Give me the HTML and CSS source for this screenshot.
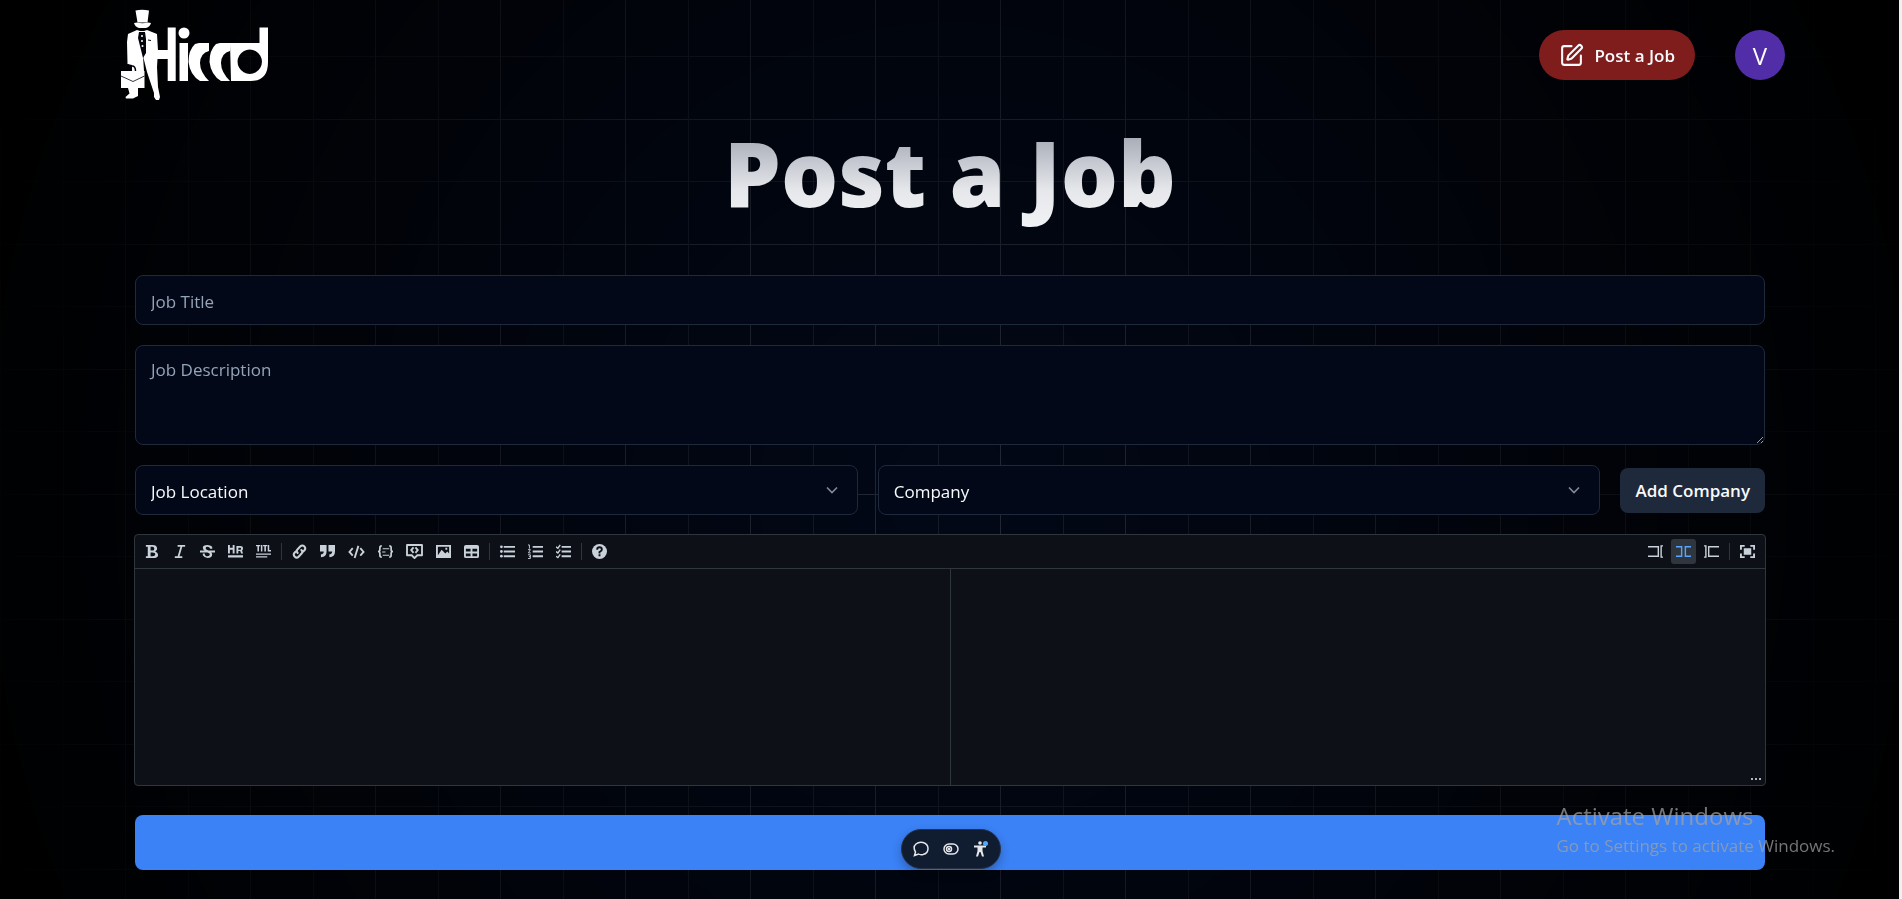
FILE: index.html
```html
<!DOCTYPE html>
<html lang="en">
<head>
<meta charset="utf-8">
<title>Post a Job</title>
<link rel="stylesheet" href="styles.css">
</head>
<body>
<div class="grid-background" aria-hidden="true"></div>
<div class="scroll-track" aria-hidden="true"></div>

<header class="site-header">
  <a class="logo" href="#" aria-label="Hirrd">
    <svg width="150" height="94" viewBox="0 0 150 94" fill="#fff" aria-hidden="true">
      <path d="M15.500 2.500q6.500-1.500 13.500 0l-1.500 12H17.500z"/>
      <path d="M14 15l3-.5q5.500 1.500 11 0l3 .5q-1 4-5 5h-7q-4-1-5-5z"/>
      <path d="M17 22l-9 4-1 8 .5 22 4.500 1v6h12l-1-15 4 16 7 21v4l2 3h3l1-3-2-10-1-20 1-16-1-17-10-4-3 1h-4z"/>
      <path d="M19 24l6 0 1 7 0 14-3 5-3-12-2-8z" fill="#02040b"/>
      <circle cx="22" cy="28" r="1"/><circle cx="22" cy="33" r="1"/><circle cx="22.500" cy="38" r="1"/>
      <path d="M28 32l3 .5M8 56.500l4 2.500" fill="none" stroke="#02040b"/>
      <path d="M8.500 63q0-5 3.500-5t3.500 5" fill="none" stroke="#02040b" stroke-width="1.500"/>
      <path d="M1 63h23.500v17H18v8l-5 2.500H6l-.5-1.500 4-3.500L8 80H1z"/>
      <path d="M1 68l12 5.500 11.500-5.500" fill="none" stroke="#02040b" stroke-width=".8"/>
      <path d="M35 42h12.700V19.500h8V73h-8V51H35z"/>
      <circle cx="64" cy="25" r="5.500"/>
      <path d="M59.500 35H68v38h-8.500z"/>
      <path d="M89 35H79l-4 1q-6.500 6-6.500 18Q70 67 80 73h9q-9-9-9-18Q80.500 45 89 43z"/>
      <path d="M111 35h-11l-4 1q-6.500 6-6.500 18Q91 67 101 73h9q-9-9-9-18Q101.500 45 110 43z"/>
      <path fill-rule="evenodd" d="M110 35h29.500V19.500h8.500V54q0 19-17 19h-20zM129.700 41.500a12.200 12.200 0 1 0 .1 0z"/>
    </svg>
  </a>
  <nav class="header-actions">
    <button class="post-button" type="button">
      <svg width="25" height="25" viewBox="0 0 24 24" fill="none" stroke="currentColor" stroke-width="2" stroke-linecap="round" stroke-linejoin="round" aria-hidden="true"><path d="M12 3H5a2 2 0 0 0-2 2v14a2 2 0 0 0 2 2h14a2 2 0 0 0 2-2v-7"/><path d="M18.375 2.625a1 1 0 0 1 3 3l-9.013 9.014a2 2 0 0 1-.853.505l-2.873.84a.5.5 0 0 1-.62-.62l.84-2.873a2 2 0 0 1 .506-.852z"/></svg>
      Post a Job
    </button>
    <button class="avatar" type="button" aria-label="Account">V</button>
  </nav>
</header>

<main class="page">
  <h1 class="page-title">Post a Job</h1>
  <form class="job-form">
    <input class="field title-field" type="text" placeholder="Job Title" aria-label="Job Title">
    <textarea class="field description-field" placeholder="Job Description" aria-label="Job Description"></textarea>
    <div class="select-row">
      <div class="select-wrap">
        <select class="field" aria-label="Job Location"><option>Job Location</option></select>
        <svg class="chevron" width="20" height="20" viewBox="0 0 24 24" aria-hidden="true"><path d="m6 9 6 6 6-6"/></svg>
      </div>
      <div class="select-wrap">
        <select class="field" aria-label="Company"><option>Company</option></select>
        <svg class="chevron" width="20" height="20" viewBox="0 0 24 24" aria-hidden="true"><path d="m6 9 6 6 6-6"/></svg>
      </div>
      <button class="add-button" type="button">Add Company</button>
    </div>

    <section class="editor" aria-label="Requirements">
      <div class="toolbar">
        <div class="tools">
          <button class="tool" type="button" aria-label="Bold"><svg viewBox="0 0 16 16"><path fill-rule="evenodd" d="M2 1h7c3 0 5 1 5 4 0 1-1 2-2 3 2 1 3 2 3 4 0 2-2 3-5 3H2v-2h2V3H2zm5 2v4h2q2 0 2-2t-2-2zm0 6v4h2q3 0 3-2t-3-2z"/></svg></button>
          <button class="tool" type="button" aria-label="Italic"><svg viewBox="0 0 16 16"><path d="M6 1h8v2h-3L8 13h3v2H3v-2h3L9 3H6z"/></svg></button>
          <button class="tool" type="button" aria-label="Strikethrough"><svg viewBox="0 0 16 16"><path d="M0 7h16v2H0zM13 5V3Q11 1 8 1 3 1 3 4q0 2 2 3h4Q6 6 6 4.500 6 3 8 3q2 0 3 2zM3 10v2q2 3 5 3 5 0 5-4 0-1-1-2H8q3 1 2.500 2.500Q10 13 8 13q-3 0-3-3z"/></svg></button>
          <button class="tool" type="button" aria-label="Horizontal rule"><svg viewBox="0 0 16 16"><path fill-rule="evenodd" d="M0 12h16v2.500H0zM0 1h2v3h3V1h2v9H5V6H2v4H0zm9 1h4q3 0 3 2.500 0 2-1 2.500l1 3h-2l-1-2.500h-2V10H9zm2 2v2h2q1 0 1-1t-1-1z"/></svg></button>
          <button class="tool" type="button" aria-label="Title"><svg viewBox="0 0 16 16"><path d="M0 10h16v1.500H0zm0 3h12v1.500H0zM0 1h4.500v1.500h-1.300V8H1.500V2.500H0zm5.200 0h1.600v7H5.200zm2.300 0H12v1.500h-1.400V8H8.900V2.500H7.500zm5 0h1.600v5.500H16V8h-3.500z"/></svg></button>
          <span class="divider"></span>
          <button class="tool" type="button" aria-label="Link"><svg viewBox="0 0 16 16"><g fill="none" stroke="currentColor" stroke-width="2.200" stroke-linecap="round"><path d="M6 9.500q-2-2 0-4L9 2.500q2-2 4 0t.5 4L12 8"/><path d="M10 6.500q2 2 0 4L7 13.500q-2 2-4 0t-.5-4L4 8"/></g></svg></button>
          <button class="tool" type="button" aria-label="Quote"><svg viewBox="0 0 16 16"><path d="M0 1h7v7q0 6-6 6v-3q3 0 3-3H0zm9 0h7v7q0 6-6 6v-3q3 0 3-3H9z"/></svg></button>
          <button class="tool wide" type="button" aria-label="Code"><svg viewBox="0 0 18 16"><path fill="none" stroke="currentColor" stroke-width="2" d="M5 4.500 1.500 8.500 5 12.500m8-8 3.500 4-3.500 4M11 2 7 15"/></svg></button>
          <button class="tool wide" type="button" aria-label="Code block"><svg viewBox="0 0 18 16"><path fill="none" stroke="currentColor" stroke-width="1.800" d="M5 2Q3 2 3 4v2q0 2-2 2 2 0 2 2v2q0 2 2 2m8-12q2 0 2 2v2q0 2 2 2-2 0-2 2v2q0 2-2 2"/><path fill="none" stroke="currentColor" stroke-width="1.200" d="M6 5h7M5.500 8.500H9M6 12h7"/></svg></button>
          <button class="tool wide" type="button" aria-label="Comment"><svg viewBox="0 0 18 16"><path fill="none" stroke="currentColor" stroke-width="2" stroke-linejoin="round" d="M1 1h16v11h-5l-3 3-3-3H1z"/><path fill="none" stroke="currentColor" stroke-width="2" d="M8 3.500 5.500 6.500 8 9.500m2-6 2.500 3-2.500 3"/></svg></button>
          <button class="tool wide" type="button" aria-label="Image"><svg viewBox="0 0 18 16"><path fill-rule="evenodd" d="M1 1h16v14H1zm2 2v9l4-6 4 4 2-2 2 2V3zm8 1h2v2h-2z"/></svg></button>
          <button class="tool" type="button" aria-label="Table"><svg viewBox="0 0 16 16"><path fill-rule="evenodd" d="M2 1h12q2 0 2 2v10q0 2-2 2H2q-2 0-2-2V3q0-2 2-2zm0 4v3h5V5zm7 0v3h5V5zm-7 5v3h5v-3zm7 0v3h5v-3z"/></svg></button>
          <span class="divider"></span>
          <button class="tool" type="button" aria-label="Bulleted list"><svg viewBox="0 0 16 16"><path d="M4 2h12v2H4zm0 5h12v2H4zm0 5h12v2H4z"/><circle cx="1.500" cy="3" r="1.500"/><circle cx="1.500" cy="8" r="1.500"/><circle cx="1.500" cy="13" r="1.500"/></svg></button>
          <button class="tool" type="button" aria-label="Numbered list"><svg viewBox="0 0 16 16"><path d="M5 2h11v2H5zm0 5h11v2H5zm0 5h11v2H5z"/><path fill="none" stroke="currentColor" d="M0 1h1.500v4M0 6h2.500L.5 9.500H3M0 11.500h2.500v4H0m1-2h1.500"/></svg></button>
          <button class="tool" type="button" aria-label="Task list"><svg viewBox="0 0 16 16"><path d="M6 2h10v2H6zm0 5h10v2H6zm0 5h10v2H6z"/><path fill="none" stroke="currentColor" stroke-width="1.500" d="m0 3 2 1.500L4.500 1M0 8l2 1.500L4.500 6M0 13l2 1.500L4.500 11"/></svg></button>
          <span class="divider"></span>
          <button class="tool" type="button" aria-label="Help"><svg viewBox="0 0 16 16"><circle cx="8" cy="8" r="8"/><path fill="none" stroke="#0d1117" stroke-width="2" d="M5.500 6q0-2.500 2.500-2.500T10.500 6Q10.500 7 8 8.500V10m0 1v2"/></svg></button>
        </div>
        <div class="tools">
          <button class="tool" type="button" aria-label="Edit"><svg viewBox="0 0 16 16"><path fill="none" stroke="currentColor" stroke-width="1.500" d="M0 3h11v10H0M16 2h-2v12h2"/></svg></button>
          <button class="tool active" type="button" aria-label="Live"><svg viewBox="0 0 16 16"><path fill="none" stroke="currentColor" stroke-width="1.500" d="M0 3h6v10H0M16 3h-6v10h6"/></svg></button>
          <button class="tool" type="button" aria-label="Preview"><svg viewBox="0 0 16 16"><path fill="none" stroke="currentColor" stroke-width="1.500" d="M16 3H5v10h11M0 2h2v12H0"/></svg></button>
          <span class="divider"></span>
          <button class="tool" type="button" aria-label="Fullscreen"><svg viewBox="0 0 16 16"><path d="M4 4.500h8v7H4z"/><path fill="none" stroke="currentColor" stroke-width="2" d="M1 6V2h4m6 0h4v4M1 10v4h4m6 0h4v-4"/></svg></button>
        </div>
      </div>
      <div class="editor-panes">
        <textarea class="editor-input" aria-label="Markdown"></textarea>
        <div class="preview"><svg width="12" height="4" viewBox="0 0 12 4" fill="#e6edf3" aria-hidden="true"><circle cx="2" cy="2" r="1"/><circle cx="6" cy="2" r="1"/><circle cx="10" cy="2" r="1"/></svg></div>
      </div>
    </section>
    <button class="submit-button" type="submit" aria-label="Submit"></button>
  </form>
</main>

<aside class="dev-toolbar" aria-label="Page tools">
  <button type="button" aria-label="Comment"><svg width="16" height="16" viewBox="0 0 16 16" fill="none" stroke="currentColor" stroke-width="1.500"><path d="M1.500 14.500 2.500 11Q-.5 6 3 3q3-2.500 7-1.500 5 1.500 5 6 0 5-5 6-3 .5-4.500-.5z"/></svg></button>
  <button type="button" aria-label="Draft mode"><svg width="16" height="16" viewBox="0 0 16 16" fill="none" stroke="currentColor" stroke-width="1.500"><rect x="1" y="3" width="14" height="10" rx="5"/><circle cx="6" cy="8" r="2.500"/><circle cx="6" cy="8" r=".5"/></svg></button>
  <button type="button" aria-label="Accessibility"><svg width="16" height="16" viewBox="0 0 16 16" fill="currentColor"><circle cx="7" cy="2" r="1.800"/><path d="M1 4.500h12v2H9.500V10l1.500 5.500H9L7.500 11h-1L5 15.500H3L4.500 10V6.500H1z"/><circle cx="12.500" cy="2.500" r="2.500" fill="#52a8ff"/></svg></button>
</aside>

<div class="watermark">
  <p class="watermark-title">Activate Windows</p>
  <p class="watermark-text">Go to Settings to activate Windows.</p>
</div>
</body>
</html>
```
FILE: styles.css
```css
* { box-sizing: border-box; }

body {
  margin: 0;
  min-height: 100vh;
  padding-right: 3px;
  overflow: hidden;
  background: #000;
  color: #f8fafc;
  font-family: "Segoe UI", "Open Sans", "Noto Sans", sans-serif;
  font-size: 17px;
}

button, input, textarea, select { font: inherit; color: inherit; }
button { border: 0; padding: 0; background: none; cursor: pointer; }

.grid-background {
  position: fixed;
  inset: 0;
  z-index: -1;
  background-color: #020817;
  background-image:
    linear-gradient(90deg, #242936 1px, transparent 1px),
    linear-gradient(90deg, #171c29 1px, transparent 1px),
    linear-gradient(#242936 1px, transparent 1px),
    linear-gradient(#171c29 1px, transparent 1px);
  background-size: 125px 125px;
  background-position: 0 0, 63px 0, 0 -6px, 0 56px;
  -webkit-mask-image: radial-gradient(ellipse 54% 120% at 50% 55%, #000, transparent);
  mask-image: radial-gradient(ellipse 54% 120% at 50% 55%, #000, transparent);
}

.scroll-track {
  position: fixed;
  inset: 0 0 0 auto;
  width: 3px;
  background: #f1f1f1;
}

.site-header {
  display: flex;
  justify-content: space-between;
  align-items: center;
  height: 110px;
  padding: 0 114px 0 120px;
}

.logo { display: flex; }
.header-actions { display: flex; align-items: center; gap: 40px; }

.post-button {
  display: flex;
  align-items: center;
  gap: 10px;
  height: 50px;
  padding: 0 20px;
  border-radius: 25px;
  background: #7f1d1d;
  font-weight: 600;
}

.avatar {
  width: 50px;
  height: 50px;
  border-radius: 50%;
  background: #512da8;
  color: #fff;
  font-size: 24px;
}

.page { padding: 0 134px 0 135px; }

.page-title {
  margin: 2px 0 43px;
  font-size: 90px;
  line-height: 120px;
  font-weight: 800;
  text-align: center;
  color: transparent;
  background: linear-gradient(#8c919f, #e5e7eb 65%, #f3f4f6);
  -webkit-background-clip: text;
  background-clip: text;
}

.job-form { display: flex; flex-direction: column; }

.field {
  display: block;
  width: 100%;
  height: 50px;
  padding: 2px 15px 0;
  border: 1px solid #1e293b;
  border-radius: 8px;
  background: #020817;
  outline: 0;
}

.field::placeholder { color: #94a3b8; opacity: 1; }
.description-field { height: 100px; margin: 20px 0; padding-top: 12px; resize: vertical; }

.select-row {
  display: grid;
  grid-template-columns: 1fr 1fr auto;
  gap: 20px;
  align-items: center;
}

.select-wrap { display: grid; align-items: center; }
.select-wrap > * { grid-area: 1 / 1; }
.select-wrap .field { appearance: none; }

.chevron {
  justify-self: end;
  margin-right: 16px;
  pointer-events: none;
  fill: none;
  stroke: #858993;
  stroke-width: 2;
}

.add-button {
  height: 45px;
  padding: 0 15px;
  border-radius: 8px;
  background: #1e293b;
  font-weight: 600;
}

.editor {
  margin: 19px -1px 29px;
  border: 1px solid #30363d;
  border-radius: 4px;
  background: #0d1117;
}

.toolbar {
  display: flex;
  justify-content: space-between;
  height: 34px;
  padding: 0 5px 0 4px;
  border-bottom: 1px solid #30363d;
  color: #c9d1d9;
}

.tools { display: flex; align-items: center; gap: 3px; }

.tool {
  display: grid;
  place-items: center;
  width: 25px;
  height: 25px;
  border-radius: 3px;
}

.tool svg { width: 15px; height: 15px; fill: currentColor; }
.wide { width: 26px; }
.wide svg { width: 17px; }
.active { background: #30363d; color: #58a6ff; }
.divider { width: 1px; height: 17px; margin: 0 2px; background: #30363d; }

.editor-panes { display: grid; grid-template-columns: 1fr 1fr; height: 216px; }
.editor-input { border: 0; padding: 12px; resize: none; background: transparent; outline: 0; }

.preview {
  display: flex;
  justify-content: flex-end;
  align-items: flex-end;
  padding: 4px 3px;
  border-left: 1px solid #30363d;
}

.submit-button { height: 55px; border-radius: 8px; background: #3b82f6; }

.dev-toolbar {
  position: fixed;
  bottom: 30px;
  left: 50%;
  display: flex;
  justify-content: center;
  align-items: center;
  gap: 14px;
  width: 100px;
  height: 40px;
  transform: translateX(-50%);
  border: 1px solid #263248;
  border-radius: 20px;
  background: #101c30;
  box-shadow: 0 4px 10px #0004;
}

.dev-toolbar button { display: flex; color: #e5e7eb; }

.watermark {
  position: fixed;
  right: 67px;
  bottom: 40px;
  color: #a2a2a2b8;
  pointer-events: none;
}

.watermark p { margin: 0; }
.watermark-title { font-size: 24px; line-height: 32px; }
.watermark-text { font-size: 17px; line-height: 27px; }
```
